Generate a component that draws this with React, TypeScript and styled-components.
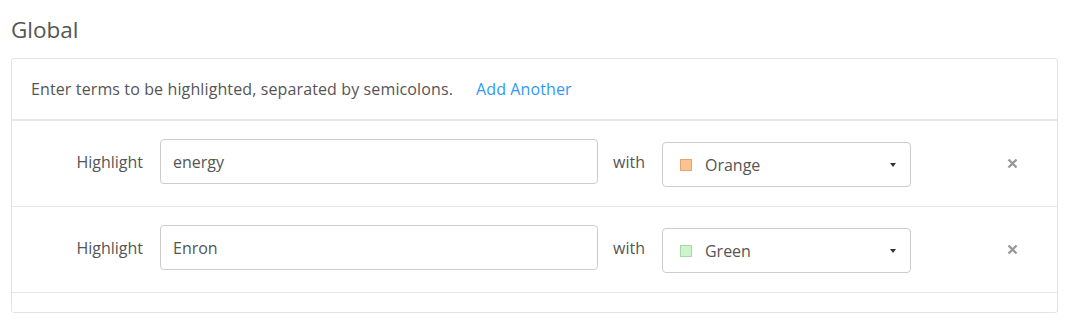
import React from "react";
import styled, { createGlobalStyle } from "styled-components";

const Global = createGlobalStyle`
  html, body { margin: 0; padding: 0; background: #fff; }
  body { font-family: "Open Sans", "Liberation Sans", sans-serif; color: #555; }
  * { box-sizing: border-box; }
`;

const Page = styled.div`
  padding: 16px 15px 0 11px;
  width: 1073px;
`;

const Title = styled.h2`
  margin: 0 0 14px 0;
  font-size: 22.5px;
  line-height: 28px;
  font-weight: 400;
  color: #555;
`;

const Panel = styled.div`
  width: 1047px;
  border: 1px solid #e3e3e3;
  border-radius: 3px;
`;

const Header = styled.div`
  height: 62px;
  padding: 20px 0 0 19px;
  border-bottom: 2px solid #e6e6e6;
  font-size: 16px;
  letter-spacing: 0.12px;
  line-height: 20px;
  display: flex;
`;

const Link = styled.a`
  color: #2e9af5;
  margin-left: 23px;
  cursor: pointer;
`;

const Row = styled.div`
  height: 86px;
  border-bottom: 1px solid #e8e8e8;
  display: flex;
  align-items: flex-start;
  font-size: 16px;
`;

const Label = styled.div`
  width: 131px;
  text-align: right;
  margin-top: 30px;
  line-height: 22px;
  margin-right: 17px;
`;

const Input = styled.input`
  width: 438px;
  height: 45px;
  margin-top: 18px;
  border: 1px solid #ccc;
  border-radius: 4px;
  padding: 0 12px;
  font-family: inherit;
  font-size: 16px;
  color: #555;
  outline: none;
`;

const With = styled.div`
  margin: 30px 17px 0 15px;
  line-height: 22px;
`;

const Select = styled.div`
  width: 249px;
  height: 45px;
  margin-top: 21px;
  border: 1px solid #ccc;
  border-radius: 4px;
  display: flex;
  align-items: center;
  padding: 0 14px 0 17px;
`;

const Swatch = styled.span<{ $fill: string; $border: string }>`
  width: 12px;
  height: 12px;
  background: ${(p) => p.$fill};
  border: 1px solid ${(p) => p.$border};
  margin-right: 13px;
  flex: none;
`;

const SelectText = styled.span`
  flex: 1;
  line-height: 22px;
`;

const Caret = styled.span`
  width: 0;
  height: 0;
  border-left: 3px solid transparent;
  border-right: 3px solid transparent;
  border-top: 4px solid #333;
`;

const Close = styled.button`
  margin: 35px 0 0 95px;
  width: 14px;
  height: 14px;
  padding: 0;
  border: 0;
  background: none;
  display: flex;
  align-items: center;
  justify-content: center;
  cursor: pointer;
`;

const Footer = styled.div`
  height: 19px;
`;

const rows = [
  { term: "energy", color: "Orange", fill: "#fcc28f", border: "#e3a56e" },
  { term: "Enron", color: "Green", fill: "#cdf5cd", border: "#a8d8a8" },
];

export default function App() {
  return (
    <>
      <Global />
      <Page>
        <Title>Global</Title>
        <Panel>
          <Header>
            <span>Enter terms to be highlighted, separated by semicolons.</span>
            <Link>Add Another</Link>
          </Header>
          {rows.map((r) => (
            <Row key={r.term}>
              <Label>Highlight</Label>
              <Input defaultValue={r.term} />
              <With>with</With>
              <Select>
                <Swatch $fill={r.fill} $border={r.border} />
                <SelectText>{r.color}</SelectText>
                <Caret />
              </Select>
              <Close aria-label="remove">
                <svg width="11" height="11" viewBox="0 0 11 11">
                  <path d="M1.5 1.5 L9.5 9.5 M9.5 1.5 L1.5 9.5" stroke="#999" strokeWidth="2.4" strokeLinecap="butt" />
                </svg>
              </Close>
            </Row>
          ))}
          <Footer />
        </Panel>
      </Page>
    </>
  );
}
